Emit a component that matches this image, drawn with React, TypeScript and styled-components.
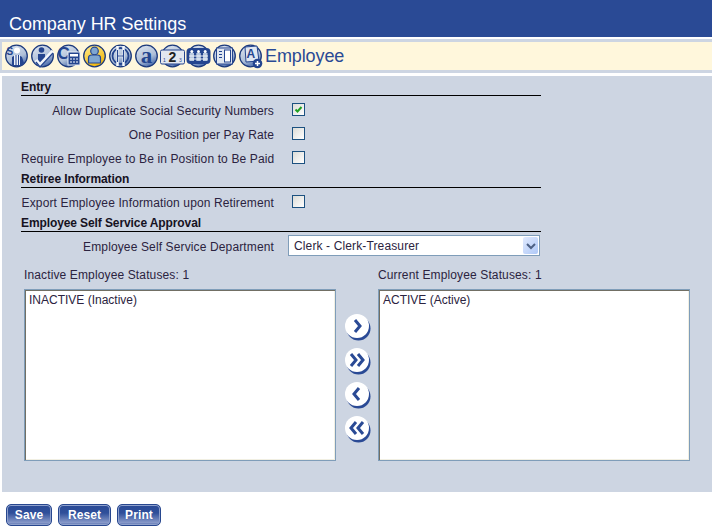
import React from "react";
import styled, { createGlobalStyle } from "styled-components";

const Global = createGlobalStyle`
  html, body { margin: 0; padding: 0; background: #fff; }
  body { font-family: "Liberation Sans", Arial, sans-serif; font-size: 12px; letter-spacing: 0.13px; color: #2b2340; }
`;

const Page = styled.div`
  width: 712px;
  height: 528px;
  overflow: hidden;
  display: flex;
  flex-direction: column;
`;

const TitleBar = styled.header`
  height: 37px;
  box-sizing: border-box;
  padding: 14px 0 0 9px;
  background: #2a4a95;
  color: #fff;
  font-size: 18px;
  line-height: 21px;
  letter-spacing: -0.05px;
`;

const ToolbarFrame = styled.div`
  margin-top: 2px;
  padding: 3px 0;
  background: #cdd5e2;
`;

const Toolbar = styled.nav`
  height: 28px;
  margin-left: 2px;
  display: flex;
  align-items: center;
  background: #fff7dc;
  padding-left: 2px;
`;

const IconSlot = styled.span`
  width: 26px;
  height: 26px;
  flex: none;
  display: block;
`;

const ToolbarTitle = styled.span`
  margin-left: 1px;
  color: #2a4a95;
  font-size: 18px;
  line-height: 22px;
  letter-spacing: -0.1px;
`;

const Panel = styled.main`
  margin: 3px 0 0 2px;
  height: 416px;
  box-sizing: border-box;
  padding: 4px 0 0 19px;
  background: #cdd5e2;
`;

const Form = styled.div`
  width: 520px;
`;

const SectionHeading = styled.h2<{ $top?: number }>`
  margin: ${(p) => p.$top ?? 0}px 0 0;
  height: 15px;
  border-bottom: 1px solid #000;
  font-size: 12px;
  font-weight: bold;
  line-height: 14px;
  letter-spacing: -0.1px;
  color: #16121f;
`;

const RowGroup = styled.div`
  padding-top: 2px;
`;

const Row = styled.div<{ $h?: number }>`
  height: ${(p) => p.$h ?? 24}px;
  display: flex;
  align-items: center;
`;

const Label = styled.label`
  width: 253px;
  flex: none;
  padding-top: 2px;
  text-align: right;
  white-space: nowrap;
`;

const Check = styled.span`
  width: 11px;
  height: 11px;
  margin: 0 0 1px 18px;
  border: 1px solid #1c5180;
  background: linear-gradient(135deg, #dcdcd7, #fff);
  display: block;
`;

const Select = styled.div`
  width: 252px;
  height: 21px;
  margin-left: 14px;
  box-sizing: border-box;
  border: 1px solid #7f9db9;
  background: #fff;
  display: flex;
  align-items: center;
  justify-content: space-between;
  padding: 0 1px 0 5px;
`;

const SelectArrow = styled.span`
  width: 15px;
  height: 17px;
  display: flex;
  align-items: center;
  justify-content: center;
  background: linear-gradient(135deg, #e1eafe, #aec8f7);
  border-radius: 2px;
`;

const Lists = styled.div`
  margin: 9px 0 0 3px;
  display: flex;
  width: 666px;
`;

const ListColumn = styled.div`
  width: 312px;
  flex: none;
`;

const ListLabel = styled.div`
  height: 21px;
  line-height: 14px;
`;

const ListBox = styled.div`
  width: 312px;
  height: 172px;
  box-sizing: border-box;
  border: 1px solid #7f9db9;
  box-shadow: inset 1px 1px 0 #716f64, inset -1px -1px 0 #f1efe2;
  background: #fff;
  padding: 3px 4px;
  line-height: 14px;
  letter-spacing: normal;
`;

const Movers = styled.div`
  width: 42px;
  flex: none;
  padding: 45px 0 0 8px;
  box-sizing: border-box;
  display: flex;
  flex-direction: column;
  gap: 6px;
`;

const MoverSlot = styled.span`
  width: 28px;
  height: 28px;
  display: block;
`;

const Footer = styled.footer`
  margin-top: 12px;
  padding-left: 6px;
  display: flex;
  gap: 6px;
`;

const ActionButton = styled.button<{ $w: number }>`
  width: ${(p) => p.$w}px;
  height: 22px;
  padding: 0;
  border: 1px solid #27478f;
  border-radius: 5px;
  background: linear-gradient(#2a4a95 0%, #2f4f9a 40%, #8b9ccb 90%, #2a4a95 100%);
  box-shadow: inset 0 0 0 1px #8ea0cc;
  color: #fff;
  font-family: "Liberation Sans", Arial, sans-serif;
  font-size: 12px;
  font-weight: bold;
  letter-spacing: 0.1px;
  text-shadow: 0 0 1px #2a4a95;
`;

const NAVY = "#24458f";

const Disc = ({ active, children }: { active?: boolean; children?: React.ReactNode }) => (
  <svg width="26" height="26" viewBox="0 0 26 26">
    <defs>
      <linearGradient id="discPlain" x1="0.2" y1="0" x2="0.7" y2="1">
        <stop offset="0" stopColor="#dbe3ee" />
        <stop offset="0.6" stopColor="#aebfd8" />
        <stop offset="1" stopColor="#3f62a8" />
      </linearGradient>
      <linearGradient id="discActive" x1="0.2" y1="0" x2="0.7" y2="1">
        <stop offset="0" stopColor="#ffe98a" />
        <stop offset="1" stopColor="#f0b400" />
      </linearGradient>
    </defs>
    <circle cx="12.5" cy="13" r="10.800" fill={`url(#${active ? "discActive" : "discPlain"})`} stroke="#1c3a7d" strokeWidth="1.3" />
    {children}
  </svg>
);

const toolbarIcons = [
  <Disc key="ssn">
    <path d="M8 23V14q5-4 10 0l2 6-3 3z" fill={NAVY} />
    <circle cx="13" cy="7.500" r="3" fill="#fff" />
    <path d="M10 12h6v10h-6z" fill="#eef2f8" />
    <path d="M12 12v10M14.500 12v10" stroke={NAVY} />
    <text x="2.500" y="12" fontSize="10" fontWeight="bold" fill={NAVY}>S</text>
  </Disc>,
  <Disc key="check">
    <circle cx="11.500" cy="7" r="2.800" fill={NAVY} />
    <path d="M8 11h7v7l-7 3z" fill={NAVY} />
    <path d="M6 17l4 5 13-14" fill="none" stroke="#f4f7fb" strokeWidth="3.500" />
    <path d="M6 19l4 5 13-14" fill="none" stroke={NAVY} strokeWidth="1.300" />
  </Disc>,
  <Disc key="calc">
    <text x="1.500" y="16" fontSize="17" fontWeight="bold" fill={NAVY}>C</text>
    <rect x="12" y="9" width="12" height="13" fill={NAVY} stroke="#e8edf5" />
    <rect x="14" y="11" width="8" height="2.500" fill="#fff" />
    <path d="M14 16h8M14 19h8" stroke="#fff" strokeDasharray="2 1" />
  </Disc>,
  <Disc key="person" active>
    <circle cx="12.500" cy="8" r="3.800" fill="#7fa6d0" stroke={NAVY} strokeWidth="1.200" />
    <path d="M6.500 20v-5q0-3 3-3h6q3 0 3 3v5z" fill="#7fa6d0" stroke={NAVY} strokeWidth="1.200" />
  </Disc>,
  <Disc key="clock">
    <circle cx="12.500" cy="13" r="8" fill="none" stroke={NAVY} strokeWidth="1.800" />
    <path d="M9.500 3v20M15.500 3v20M9.500 13h6" stroke="#f4f7fb" strokeWidth="2.500" />
    <path d="M9.500 7v12M15.500 7v12M9.500 13h6" stroke={NAVY} strokeWidth="1.200" />
  </Disc>,
  <Disc key="a">
    <text x="12.500" y="19.500" textAnchor="middle" fontFamily="Liberation Serif" fontSize="23" fontWeight="bold" fill={NAVY}>a</text>
  </Disc>,
  <Disc key="two">
    <rect x="0.500" y="7" width="24" height="14" rx="1.500" fill="#e3e8f0" stroke={NAVY} />
    <text x="12.500" y="19" textAnchor="middle" fontSize="14" fontWeight="bold" fill="#222">2</text>
    <text x="3" y="18.500" fontSize="5" fill={NAVY}>1</text>
    <text x="19" y="18.500" fontSize="5" fill={NAVY}>3</text>
  </Disc>,
  <Disc key="group">
    <rect x="0.500" y="5" width="24" height="16" rx="4" fill={NAVY} />
    <path d="M3.500 10h4.500v8H3.500zM10.300 10h4.500v8h-4.500zM17 10h4.500v8H17z" fill="#b9c9e0" />
    <path d="M3 13h19M3 16h19" stroke="#f0f3f8" />
    <circle cx="5.800" cy="8.500" r="1.500" fill="#fff" />
    <circle cx="12.500" cy="8.500" r="1.500" fill="#fff" />
    <circle cx="19.200" cy="8.500" r="1.500" fill="#fff" />
  </Disc>,
  <Disc key="panel">
    <rect x="4.500" y="5" width="16" height="16" fill="#dfe6f0" stroke={NAVY} />
    <rect x="12.500" y="7" width="6" height="12" fill="#fff" stroke={NAVY} />
    <path d="M7 8.500h3M7 11.500h3M7 14.500h3" stroke={NAVY} />
  </Disc>,
  <Disc key="add">
    <path d="M7 4l12-1 2 15-13 1z" fill="#e0e7f1" stroke={NAVY} />
    <text x="8.500" y="15" fontSize="12" fontWeight="bold" fill={NAVY}>A</text>
    <circle cx="19.500" cy="20.500" r="4.800" fill={NAVY} />
    <path d="M17 20.500h5M19.500 18v5" stroke="#fff" strokeWidth="1.500" />
  </Disc>,
];

const Mover = ({ d }: { d: string }) => (
  <MoverSlot>
    <svg width="28" height="28" viewBox="0 0 28 28">
      <circle cx="14.500" cy="15.500" r="12" fill="#2a4a95" />
      <circle cx="13" cy="13" r="12" fill="#fff" />
      <path d={d} fill="none" stroke="#2a4a95" strokeWidth="3" />
    </svg>
  </MoverSlot>
);

const ToggleCheck = ({ on }: { on?: boolean }) => (
  <Check>
    {on && (
      <svg width="11" height="11" viewBox="0 0 11 11" style={{ display: "block" }}>
        <path d="M2.500 5.500l2 2 4-4.500" fill="none" stroke="#21a121" strokeWidth="2" />
      </svg>
    )}
  </Check>
);

export default function App() {
  return (
    <Page>
      <Global />
      <TitleBar>Company HR Settings</TitleBar>
      <ToolbarFrame>
        <Toolbar>
          {toolbarIcons.map((icon, i) => (
            <IconSlot key={i}>{icon}</IconSlot>
          ))}
          <ToolbarTitle>Employee</ToolbarTitle>
        </Toolbar>
      </ToolbarFrame>
      <Panel>
        <Form>
          <SectionHeading>Entry</SectionHeading>
          <RowGroup>
            <Row>
              <Label>Allow Duplicate Social Security Numbers</Label>
              <ToggleCheck on />
            </Row>
            <Row>
              <Label>One Position per Pay Rate</Label>
              <ToggleCheck />
            </Row>
            <Row>
              <Label>Require Employee to Be in Position to Be Paid</Label>
              <ToggleCheck />
            </Row>
          </RowGroup>
          <SectionHeading $top={2}>Retiree Information</SectionHeading>
          <Row $h={28}>
            <Label>Export Employee Information upon Retirement</Label>
            <ToggleCheck />
          </Row>
          <SectionHeading>Employee Self Service Approval</SectionHeading>
          <Row $h={27}>
            <Label>Employee Self Service Department</Label>
            <Select>
              Clerk - Clerk-Treasurer
              <SelectArrow>
                <svg width="10" height="8" viewBox="0 0 10 8">
                  <path d="M1 2l4 4 4-4" fill="none" stroke="#4d6185" strokeWidth="2" />
                </svg>
              </SelectArrow>
            </Select>
          </Row>
        </Form>
        <Lists>
          <ListColumn>
            <ListLabel>Inactive Employee Statuses: 1</ListLabel>
            <ListBox>INACTIVE (Inactive)</ListBox>
          </ListColumn>
          <Movers>
            <Mover d="M11 7l5 6-5 6" />
            <Mover d="M7 7l5 6-5 6M14 7l5 6-5 6" />
            <Mover d="M15 7l-5 6 5 6" />
            <Mover d="M12 7l-5 6 5 6M19 7l-5 6 5 6" />
          </Movers>
          <ListColumn>
            <ListLabel>Current Employee Statuses: 1</ListLabel>
            <ListBox>ACTIVE (Active)</ListBox>
          </ListColumn>
        </Lists>
      </Panel>
      <Footer>
        <ActionButton $w={46}>Save</ActionButton>
        <ActionButton $w={53}>Reset</ActionButton>
        <ActionButton $w={44}>Print</ActionButton>
      </Footer>
    </Page>
  );
}
